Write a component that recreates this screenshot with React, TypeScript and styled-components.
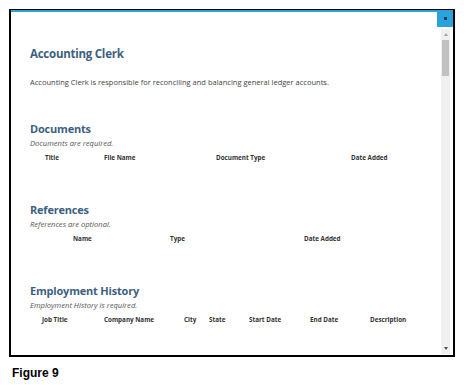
import React from "react"
import styled, { createGlobalStyle } from "styled-components"

const GlobalStyle = createGlobalStyle`
  html, body {
    margin: 0;
    padding: 0;
    background: #ffffff;
  }
`

const Page = styled.div`
  width: 469px;
  height: 385px;
  padding: 9px 0 0 9px;
  box-sizing: border-box;
  font-family: "Open Sans", "DejaVu Sans", sans-serif;
`

const Frame = styled.div`
  width: 446px;
  height: 348px;
  box-sizing: border-box;
  border: 2px solid #000000;
  border-top-width: 1px;
  display: flex;
  flex-direction: column;
  overflow: hidden;
`

const TopBar = styled.div`
  display: flex;
  height: 17px;
  flex-shrink: 0;
`

const TopLine = styled.div`
  flex: 1;
  border-top: 2px solid #2aa3dc;
`

const CloseButton = styled.button`
  width: 16px;
  height: 17px;
  padding: 0;
  border: none;
  background: #2aa3dc;
  display: flex;
  align-items: center;
  justify-content: center;
  cursor: pointer;
`

const CloseGlyph = styled.span`
  display: block;
  width: 3px;
  height: 3px;
  background: #1f3c57;
`

const Body = styled.div`
  flex: 1;
  display: flex;
  min-height: 0;
`

const Content = styled.div`
  flex: 1;
  padding: 19px 0 0 19px;
  overflow: hidden;
`

const Title = styled.h1`
  margin: 0;
  font-size: 11.5px;
  font-weight: 700;
  letter-spacing: -0.25px;
  color: #3d5f80;
  line-height: 16px;
`

const Description = styled.p`
  margin: 15px 0 0;
  font-size: 7.5px;
  line-height: 10px;
  color: #444444;
`

const Section = styled.section<{ $top: number }>`
  margin-top: ${(p) => p.$top}px;
`

const SectionTitle = styled.h2`
  margin: 0;
  font-size: 11px;
  font-weight: 700;
  letter-spacing: -0.2px;
  color: #3d5f80;
  line-height: 14px;
`

const Note = styled.p`
  margin: 0;
  font-size: 7.6px;
  font-style: italic;
  color: #555555;
  line-height: 14px;
`

const HeaderRow = styled.div<{ $cols: string; $indent: number }>`
  display: grid;
  grid-template-columns: ${(p) => p.$cols};
  padding-left: ${(p) => p.$indent}px;
  margin-top: 3px;
`

const HeaderCell = styled.span`
  font-size: 6.3px;
  font-weight: 700;
  color: #333333;
  line-height: 10px;
  white-space: nowrap;
`

const Scrollbar = styled.div`
  width: 9px;
  margin: 2px 3px 1px 0;
  background: #f0f0f0;
  display: flex;
  flex-direction: column;
  align-items: center;
`

const Arrow = styled.div<{ $down?: boolean; $color: string }>`
  width: 0;
  height: 0;
  margin: 4px 0;
  border-left: 2.5px solid transparent;
  border-right: 2.5px solid transparent;
  ${(p) =>
    p.$down
      ? `border-top: 3px solid ${p.$color};`
      : `border-bottom: 3px solid ${p.$color};`}
`

const Thumb = styled.div`
  width: 7px;
  height: 36px;
  background: #c1c1c1;
`

const Spacer = styled.div`
  flex: 1;
`

const Caption = styled.div`
  margin: 9px 0 0 3px;
  font-family: "Liberation Sans", Arial, sans-serif;
  font-size: 12px;
  font-weight: 700;
  color: #000000;
`

type Table = {
  title: string
  note: string
  cols: string
  indent: number
  headers: string[]
  top: number
}

const tables: Table[] = [
  {
    title: "Documents",
    note: "Documents are required.",
    cols: "59px 112px 135px auto",
    indent: 15,
    headers: ["Title", "File Name", "Document Type", "Date Added"],
    top: 35,
  },
  {
    title: "References",
    note: "References are optional.",
    cols: "97px 134px auto",
    indent: 43,
    headers: ["Name", "Type", "Date Added"],
    top: 40,
  },
  {
    title: "Employment History",
    note: "Employment History is required.",
    cols: "62px 80px 25px 40px 61px 60px auto",
    indent: 12,
    headers: [
      "Job Title",
      "Company Name",
      "City",
      "State",
      "Start Date",
      "End Date",
      "Description",
    ],
    top: 40,
  },
]

export default function App() {
  return (
    <Page>
      <GlobalStyle />
      <Frame>
        <TopBar>
          <TopLine />
          <CloseButton aria-label="Close">
            <CloseGlyph />
          </CloseButton>
        </TopBar>
        <Body>
          <Content>
            <Title>Accounting Clerk</Title>
            <Description>
              Accounting Clerk is responsible for reconciling and balancing
              general ledger accounts.
            </Description>
            {tables.map((t) => (
              <Section key={t.title} $top={t.top}>
                <SectionTitle>{t.title}</SectionTitle>
                <Note>{t.note}</Note>
                <HeaderRow $cols={t.cols} $indent={t.indent}>
                  {t.headers.map((h) => (
                    <HeaderCell key={h}>{h}</HeaderCell>
                  ))}
                </HeaderRow>
              </Section>
            ))}
          </Content>
          <Scrollbar>
            <Arrow $color="#a3a3a3" />
            <Thumb />
            <Spacer />
            <Arrow $down $color="#505050" />
          </Scrollbar>
        </Body>
      </Frame>
      <Caption>Figure 9</Caption>
    </Page>
  )
}
